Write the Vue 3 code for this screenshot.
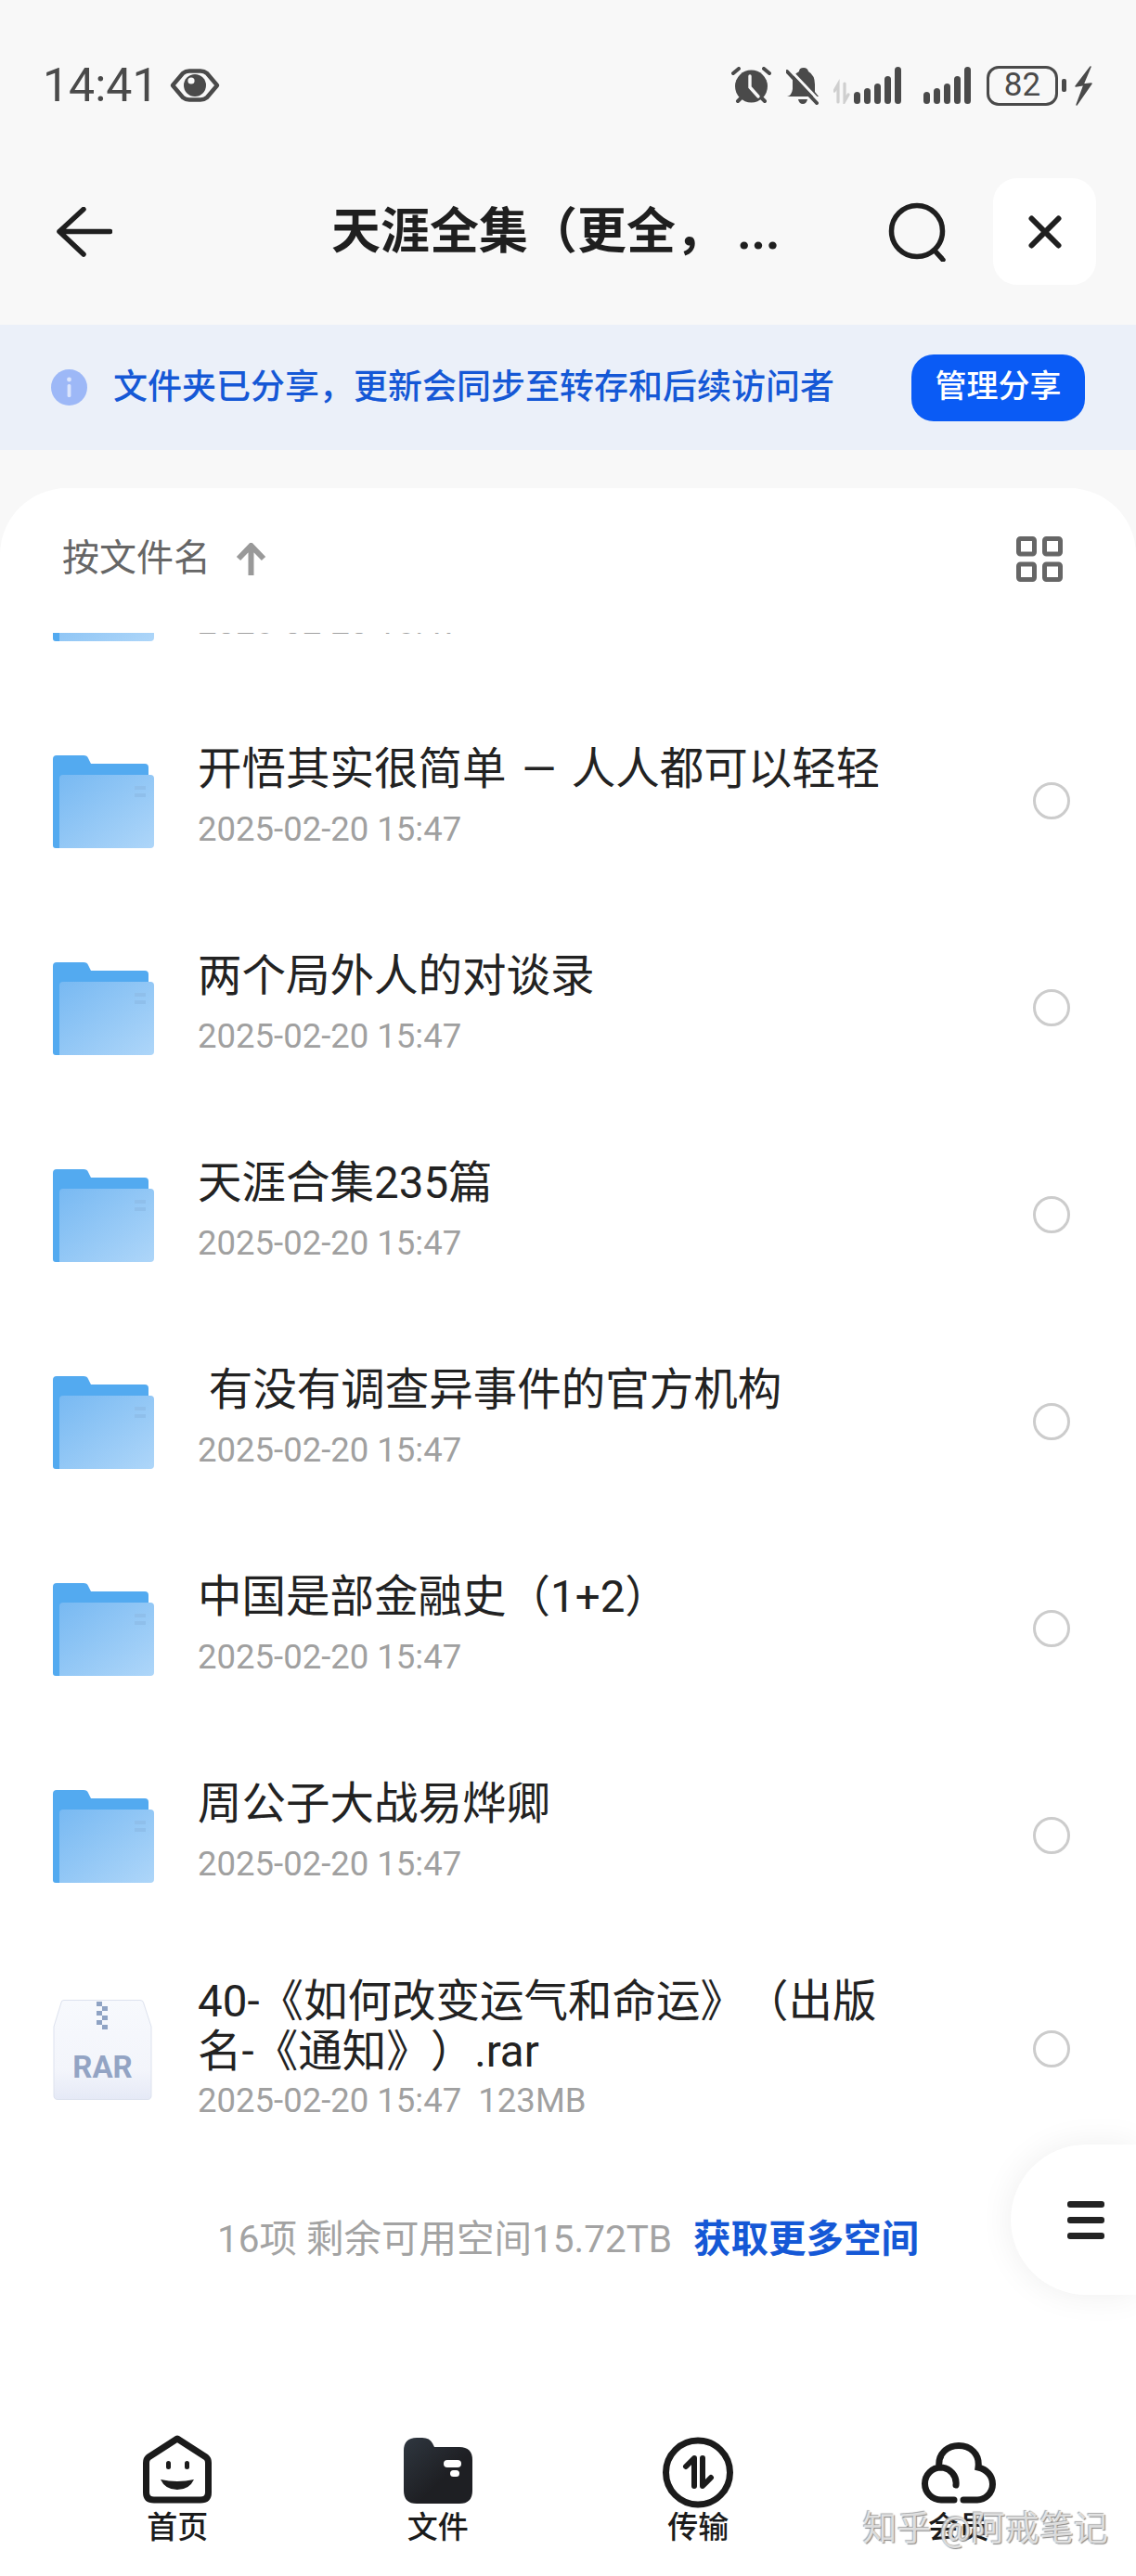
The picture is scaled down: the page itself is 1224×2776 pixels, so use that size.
<template>
  <div class="page">
    <div class="status">
      <div class="time">14:41</div>
      <svg class="eye" width="54" height="36" viewBox="0 0 54 36">
        <path d="M3 18 L14 5 Q17 2.5 21 2.5 H33 Q37 2.5 40 5 L51 18 L40 31 Q37 33.5 33 33.5 H21 Q17 33.5 14 31 Z" fill="none" stroke="#4a4a4a" stroke-width="4.5" stroke-linejoin="round" />
        <circle cx="27" cy="18" r="12" fill="#4a4a4a" />
        <circle cx="23" cy="13" r="3.6" fill="#f8f8f8" />
      </svg>
      <div class="status-right">
        <svg width="43" height="40" viewBox="0 0 43 40">
          <path d="M2 7 L8 2 M41 7 L35 2 M7 37 L11 33 M36 37 L32 33" stroke="#4a4a4a" stroke-width="4" stroke-linecap="round" />
          <circle cx="21.5" cy="21" r="17.5" fill="#4a4a4a" />
          <path d="M20 10 V22 L29 32" fill="none" stroke="#f8f8f8" stroke-width="3.4" stroke-linecap="round" />
        </svg>
        <svg class="bell" width="36" height="41" viewBox="0 0 36 41">
          <path d="M14 5 Q14 1 19 1 Q23 1 24 5 Q31 9 31 19 V27 L35 32 H1 Q6 31 7 24 V13 Q8 8 14 5 Z M13 35 H23 Q22 40 18 40 Q14 40 13 35 Z" fill="#4a4a4a" />
          <path d="M3 2 L36 37" stroke="#f8f8f8" stroke-width="3" />
          <path d="M1 5 L33 39" stroke="#4a4a4a" stroke-width="4" stroke-linecap="round" />
        </svg>
        <svg class="signal-a" width="73" height="40" viewBox="0 0 73 40">
          <path d="M5 38 V19 L1 26 M12 18 V37 L16 30" fill="none" stroke="#cfcfcf" stroke-width="3.2" stroke-linecap="round" />
          <rect v-for="(h, i) in barHeights" :key="i" :x="22 + i * 11" :y="40 - h" width="7" :height="h" rx="3.5" fill="#4a4a4a" />
        </svg>
        <svg class="signal-b" width="51" height="40" viewBox="0 0 51 40">
          <rect v-for="(h, i) in barHeights" :key="i" :x="i * 11" :y="40 - h" width="7" :height="h" rx="3.5" fill="#4a4a4a" />
        </svg>
        <div class="battery">82</div>
        <div class="battery-cap"></div>
        <svg class="bolt" width="19" height="43" viewBox="0 0 19 43">
          <path d="M17 1 L1 22 L10 20.5 L2 42 L18 19 L9 20 Z" fill="#4a4a4a" stroke="#4a4a4a" stroke-width="1.5" stroke-linejoin="round" />
        </svg>
      </div>
    </div>

    <div class="topbar">
      <svg class="back" width="60" height="54" viewBox="0 0 60 54">
        <path d="M29 2.5 L3 26.5 L29 51 M3 26.5 H57.5" fill="none" stroke="#1f1f1f" stroke-width="5.5" stroke-linecap="round" stroke-linejoin="round" />
      </svg>
      <div class="title">天涯全集（更全， ...</div>
      <svg class="search" width="62" height="64" viewBox="0 0 62 64">
        <circle cx="31" cy="31" r="27.5" fill="none" stroke="#1f1f1f" stroke-width="5.5" />
        <path d="M50 52 L59 62" stroke="#1f1f1f" stroke-width="5.5" stroke-linecap="round" />
      </svg>
      <div class="close">
        <svg width="36" height="36" viewBox="0 0 36 36">
          <path d="M3.5 3.5 L32.5 32.5 M32.5 3.5 L3.5 32.5" stroke="#1f1f1f" stroke-width="6" stroke-linecap="round" />
        </svg>
      </div>
    </div>

    <div class="banner">
      <svg width="39" height="39" viewBox="0 0 39 39">
        <circle cx="19.5" cy="19.5" r="19.5" fill="#9db8f7" />
        <circle cx="19.5" cy="11" r="2.4" fill="#dbe5fc" />
        <rect x="17.6" y="16" width="3.8" height="14" rx="1.5" fill="#dbe5fc" />
      </svg>
      <div class="banner-text">文件夹已分享，更新会同步至转存和后续访问者</div>
      <div class="manage">管理分享</div>
    </div>

    <div class="card">
      <div class="sort">
        <span class="sort-label">按文件名</span>
        <svg class="sort-arrow" width="33" height="35" viewBox="0 0 33 35">
          <path d="M16.5 3 V35 M3 17 L16.5 3 L30 17" fill="none" stroke="#999" stroke-width="6" />
        </svg>
        <svg class="grid-icon" width="50" height="49" viewBox="0 0 50 49">
          <rect x="2.5" y="2.5" width="17" height="16.5" rx="2" />
          <rect x="30.5" y="2.5" width="17" height="16.5" rx="2" />
          <rect x="2.5" y="30" width="17" height="16.5" rx="2" />
          <rect x="30.5" y="30" width="17" height="16.5" rx="2" />
        </svg>
      </div>

      <div class="list">
        <div v-for="(name, i) in folders" :key="i" class="row">
          <svg class="file-icon" width="110" height="100" viewBox="0 0 110 100">
            <defs>
              <linearGradient id="folderFront" x1="0" y1="0" x2="1" y2="1">
                <stop offset="0" stop-color="#78b9f2" />
                <stop offset="1" stop-color="#aed6f9" />
              </linearGradient>
            </defs>
            <path d="M0 4 Q0 0 4 0 H33 Q37 0 38 3 L41 9 H99 Q103 9 103 13 V100 H3 Q0 100 0 97 Z" fill="#53aaf0" />
            <path d="M7 25 Q7 21 11 21 H105 Q109 21 109 25 V96 Q109 100 105 100 H7 Z" fill="url(#folderFront)" />
            <rect x="88" y="33" width="12" height="4" fill="#8fbfeb" />
            <rect x="88" y="41" width="12" height="4" fill="#8fbfeb" />
          </svg>
          <div class="info">
            <div class="name">{{ name }}</div>
            <div class="date">2025-02-20 15:47</div>
          </div>
          <div class="radio"></div>
        </div>

        <div class="row row-rar">
          <svg class="file-icon rar-icon" width="107" height="108" viewBox="0 0 107 108">
            <defs>
              <linearGradient id="rarBody" x1="0" y1="0" x2="0" y2="1">
                <stop offset="0" stop-color="#f7f9fd" />
                <stop offset="0.7" stop-color="#f3f5fb" />
                <stop offset="1" stop-color="#e5e9f6" />
              </linearGradient>
            </defs>
            <path d="M9 3 Q9 0.5 12 0.5 H94 Q97 0.5 97.5 3 L106 29 V103 Q106 107.5 102 107.5 H5 Q1 107.5 1 103 V29 Z" fill="url(#rarBody)" stroke="#dde2ee" stroke-width="1" />
            <g fill="#8fa3c4">
              <rect x="47" y="2" width="6" height="5" />
              <rect x="53" y="7" width="6" height="5" />
              <rect x="47" y="12" width="6" height="5" />
              <rect x="53" y="17" width="6" height="5" />
              <rect x="47" y="22" width="6" height="5" />
              <rect x="53" y="27" width="6" height="5" />
            </g>
            <text x="53.5" y="84" text-anchor="middle" class="rar-text">RAR</text>
          </svg>
          <div class="info">
            <div class="name name-rar">40-《如何改变运气和命运》（出版名-《通知》）.rar</div>
            <div class="date date-rar">2025-02-20 15:47&nbsp;&nbsp;123MB</div>
          </div>
          <div class="radio"></div>
        </div>

        <div class="summary">
          <span class="summary-grey">16项 剩余可用空间15.72TB</span>
          <span class="summary-link">获取更多空间</span>
        </div>
      </div>

      <div class="nav">
        <div class="nav-item">
          <div class="nav-icon">
            <svg width="74" height="74" viewBox="0 0 74 74">
              <path d="M37 4 L68 24 Q70.5 26 70.5 30 V62 Q70.5 70 62 70 H12 Q3.5 70 3.5 62 V30 Q3.5 26 6 24 Z" fill="none" stroke="#1b1b1b" stroke-width="7" stroke-linejoin="round" />
              <rect x="25" y="28" width="5" height="9" rx="2.5" fill="#1b1b1b" />
              <rect x="45" y="28" width="5" height="9" rx="2.5" fill="#1b1b1b" />
              <path d="M19 48 Q37 52 55 48 Q50 59 37 59 Q24 59 19 48 Z" fill="#1b1b1b" />
            </svg>
          </div>
          <div class="nav-label">首页</div>
        </div>
        <div class="nav-item">
          <div class="nav-icon">
            <svg width="74" height="71" viewBox="0 0 74 71">
              <defs>
                <linearGradient id="fileTab" x1="0" y1="0" x2="1" y2="1">
                  <stop offset="0" stop-color="#2f3740" />
                  <stop offset="0.6" stop-color="#1e1f23" />
                </linearGradient>
              </defs>
              <path d="M0 14 Q0 0 14 0 H20 Q28 0 31 6 L33 10 H60 Q74 10 74 24 V57 Q74 71 60 71 H14 Q0 71 0 57 Z" fill="url(#fileTab)" />
              <rect x="43" y="24" width="19" height="8" rx="4" fill="#fff" />
              <rect x="50" y="35" width="10" height="7" rx="3.5" fill="#fff" />
            </svg>
          </div>
          <div class="nav-label">文件</div>
        </div>
        <div class="nav-item">
          <div class="nav-icon nav-icon-tall">
            <svg width="76" height="77" viewBox="0 0 76 77">
              <circle cx="38" cy="38.5" r="34.5" fill="none" stroke="#1b1b1b" stroke-width="7" />
              <path d="M34 53 V23 L25 32 M43 23 V53 L52 44" fill="none" stroke="#1b1b1b" stroke-width="6" stroke-linecap="round" stroke-linejoin="round" />
            </svg>
          </div>
          <div class="nav-label">传输</div>
        </div>
        <div class="nav-item">
          <div class="nav-icon">
            <svg width="80" height="66" viewBox="0 0 80 66">
              <path d="M35 62 H21 A17.5 17.5 0 0 1 21 27 A17 17 0 0 1 37 46 M19 27 C17 12 28 3.5 40 3.5 C52 3.5 63 12 61 27 C70 29 76.5 36 76.5 45 C76.5 55 68 62 60 62 H45" fill="none" stroke="#1b1b1b" stroke-width="7" stroke-linecap="round" />
            </svg>
          </div>
          <div class="nav-label">会员</div>
        </div>
      </div>
    </div>

    <div class="float-menu">
      <span></span>
      <span></span>
      <span></span>
    </div>
    <div class="watermark">知乎 @阿戒笔记</div>
  </div>
</template>

<script setup>
const barHeights = [13, 17, 22, 30, 40]

const folders = [
  '',
  '开悟其实很简单 \u200a—\u200a 人人都可以轻轻',
  '两个局外人的对谈录',
  '天涯合集235篇',
  ' 有没有调查异事件的官方机构',
  '中国是部金融史（1+2）',
  '周公子大战易烨卿'
]
</script>

<style>
html,
body {
  margin: 0;
  background: #f8f8f8;
}
</style>

<style scoped>
.page {
  position: relative;
  width: 1224px;
  height: 2776px;
  overflow: hidden;
  display: flex;
  flex-direction: column;
  background: #f8f8f8;
  font-family: Roboto, "Noto Sans CJK SC", sans-serif;
  color: #222;
  text-spacing-trim: space-all;
}

.status {
  height: 184px;
  box-sizing: border-box;
  padding: 0 47px 0 46px;
  display: flex;
  align-items: center;
}

.time {
  font-size: 50px;
  color: #4a4a4a;
  line-height: 56px;
}

.eye {
  margin-left: 12px;
}

.status-right {
  margin-left: auto;
  display: flex;
  align-items: center;
}

.bell {
  margin-left: 16px;
}

.signal-a {
  margin-left: 15px;
}

.signal-b {
  margin-left: 24px;
}

.battery {
  margin-left: 17px;
  width: 77px;
  height: 43px;
  box-sizing: border-box;
  border: 3.5px solid #4a4a4a;
  border-radius: 13px;
  font-size: 35px;
  line-height: 36px;
  text-align: center;
  color: #4a4a4a;
}

.battery-cap {
  margin-left: 4px;
  width: 5px;
  height: 14px;
  border-radius: 2px;
  background: #4a4a4a;
}

.bolt {
  margin-left: 9px;
}

.topbar {
  height: 166px;
  box-sizing: border-box;
  padding: 8px 43px 43px 61px;
  display: flex;
  align-items: center;
}

.title {
  margin-left: 236px;
  width: 500px;
  font-size: 53px;
  font-weight: 700;
  line-height: 70px;
  color: #1f1f1f;
  white-space: pre;
}

.search {
  margin-left: auto;
}

.close {
  margin-left: 51px;
  width: 111px;
  height: 115px;
  border-radius: 26px;
  background: #fff;
  display: flex;
  align-items: center;
  justify-content: center;
}

.banner {
  height: 135px;
  box-sizing: border-box;
  padding: 0 55px;
  display: flex;
  align-items: center;
  background: #ebf0f9;
}

.banner-text {
  margin-left: 28px;
  font-size: 37px;
  font-weight: 500;
  line-height: 50px;
  color: #1558d6;
  white-space: nowrap;
}

.manage {
  margin-left: auto;
  width: 187px;
  height: 72px;
  border-radius: 24px;
  background: #0a5bf5;
  color: #fff;
  font-size: 34px;
  font-weight: 500;
  line-height: 68px;
  text-align: center;
}

.card {
  margin-top: 41px;
  flex: 1;
  min-height: 0;
  display: flex;
  flex-direction: column;
  background: #fff;
  border-radius: 72px 72px 0 0;
}

.sort {
  height: 156px;
  box-sizing: border-box;
  padding: 0 79px 4px 67px;
  display: flex;
  align-items: center;
  flex-shrink: 0;
}

.sort-label {
  font-size: 40px;
  line-height: 50px;
  color: #666;
}

.sort-arrow {
  margin-left: 27px;
}

.grid-icon {
  margin-left: auto;
  fill: none;
  stroke: #666;
  stroke-width: 5;
}

.list {
  flex: 1;
  min-height: 0;
  overflow: hidden;
}

.row {
  height: 223px;
  box-sizing: border-box;
  padding: 0 71px 0 57px;
  display: flex;
  align-items: center;
}

.row:first-child {
  margin-top: -154px;
}

.row-rar {
  height: 237px;
}

.file-icon {
  flex-shrink: 0;
  margin-top: 3px;
}

.rar-icon {
  margin-right: 3px;
}

.info {
  margin-left: 46px;
  margin-bottom: 8px;
  flex: 1;
  min-width: 0;
}

.row-rar .info {
  margin-bottom: 0;
}

.name {
  font-size: 47.5px;
  line-height: 56px;
  min-height: 56px;
  color: #222;
  white-space: pre-wrap;
}

.name-rar {
  max-width: 760px;
  line-height: 54px;
}

.date {
  margin-top: 15px;
  font-size: 36.5px;
  line-height: 44px;
  color: #a0a0a0;
}

.date-rar {
  margin-top: 4px;
}

.radio {
  width: 40px;
  height: 40px;
  box-sizing: border-box;
  border: 3.5px solid #ccc;
  border-radius: 50%;
  flex-shrink: 0;
}

.rar-text {
  font-family: Roboto, sans-serif;
  font-size: 33px;
  font-weight: 700;
  fill: #93a4c4;
}

.summary {
  height: 166px;
  display: flex;
  align-items: center;
  justify-content: center;
  gap: 23px;
  font-size: 40.5px;
}

.summary-grey {
  color: #a3a3a3;
}

.summary-link {
  color: #1558d6;
  font-weight: 700;
}

.nav {
  flex-shrink: 0;
  padding: 0 51px 32px;
  display: grid;
  grid-template-columns: repeat(4, 1fr);
  background: #fff;
}

.nav-item {
  display: flex;
  flex-direction: column;
  align-items: center;
}

.nav-icon {
  height: 74px;
  display: flex;
  align-items: flex-end;
  margin-bottom: 6px;
}

.nav-icon-tall svg {
  margin-bottom: -5px;
}

.nav-label {
  font-size: 33px;
  font-weight: 500;
  line-height: 40px;
  color: #1b1b1b;
}

.float-menu {
  position: absolute;
  top: 2311px;
  right: 0;
  width: 135px;
  height: 162px;
  box-sizing: border-box;
  padding-left: 61px;
  display: flex;
  flex-direction: column;
  justify-content: center;
  gap: 10px;
  border-radius: 81px 0 0 81px;
  background: #fff;
  box-shadow: 0 0 36px rgba(0, 0, 0, 0.07);
}

.float-menu span {
  width: 40px;
  height: 7px;
  border-radius: 3px;
  background: #222;
}

.watermark {
  position: absolute;
  top: 2703px;
  right: 30px;
  font-size: 37px;
  line-height: 46px;
  white-space: nowrap;
  color: rgba(255, 255, 255, 0.7);
  text-shadow: 1px 1px 1px #888, -1px -1px 1px #aaa;
}
</style>
